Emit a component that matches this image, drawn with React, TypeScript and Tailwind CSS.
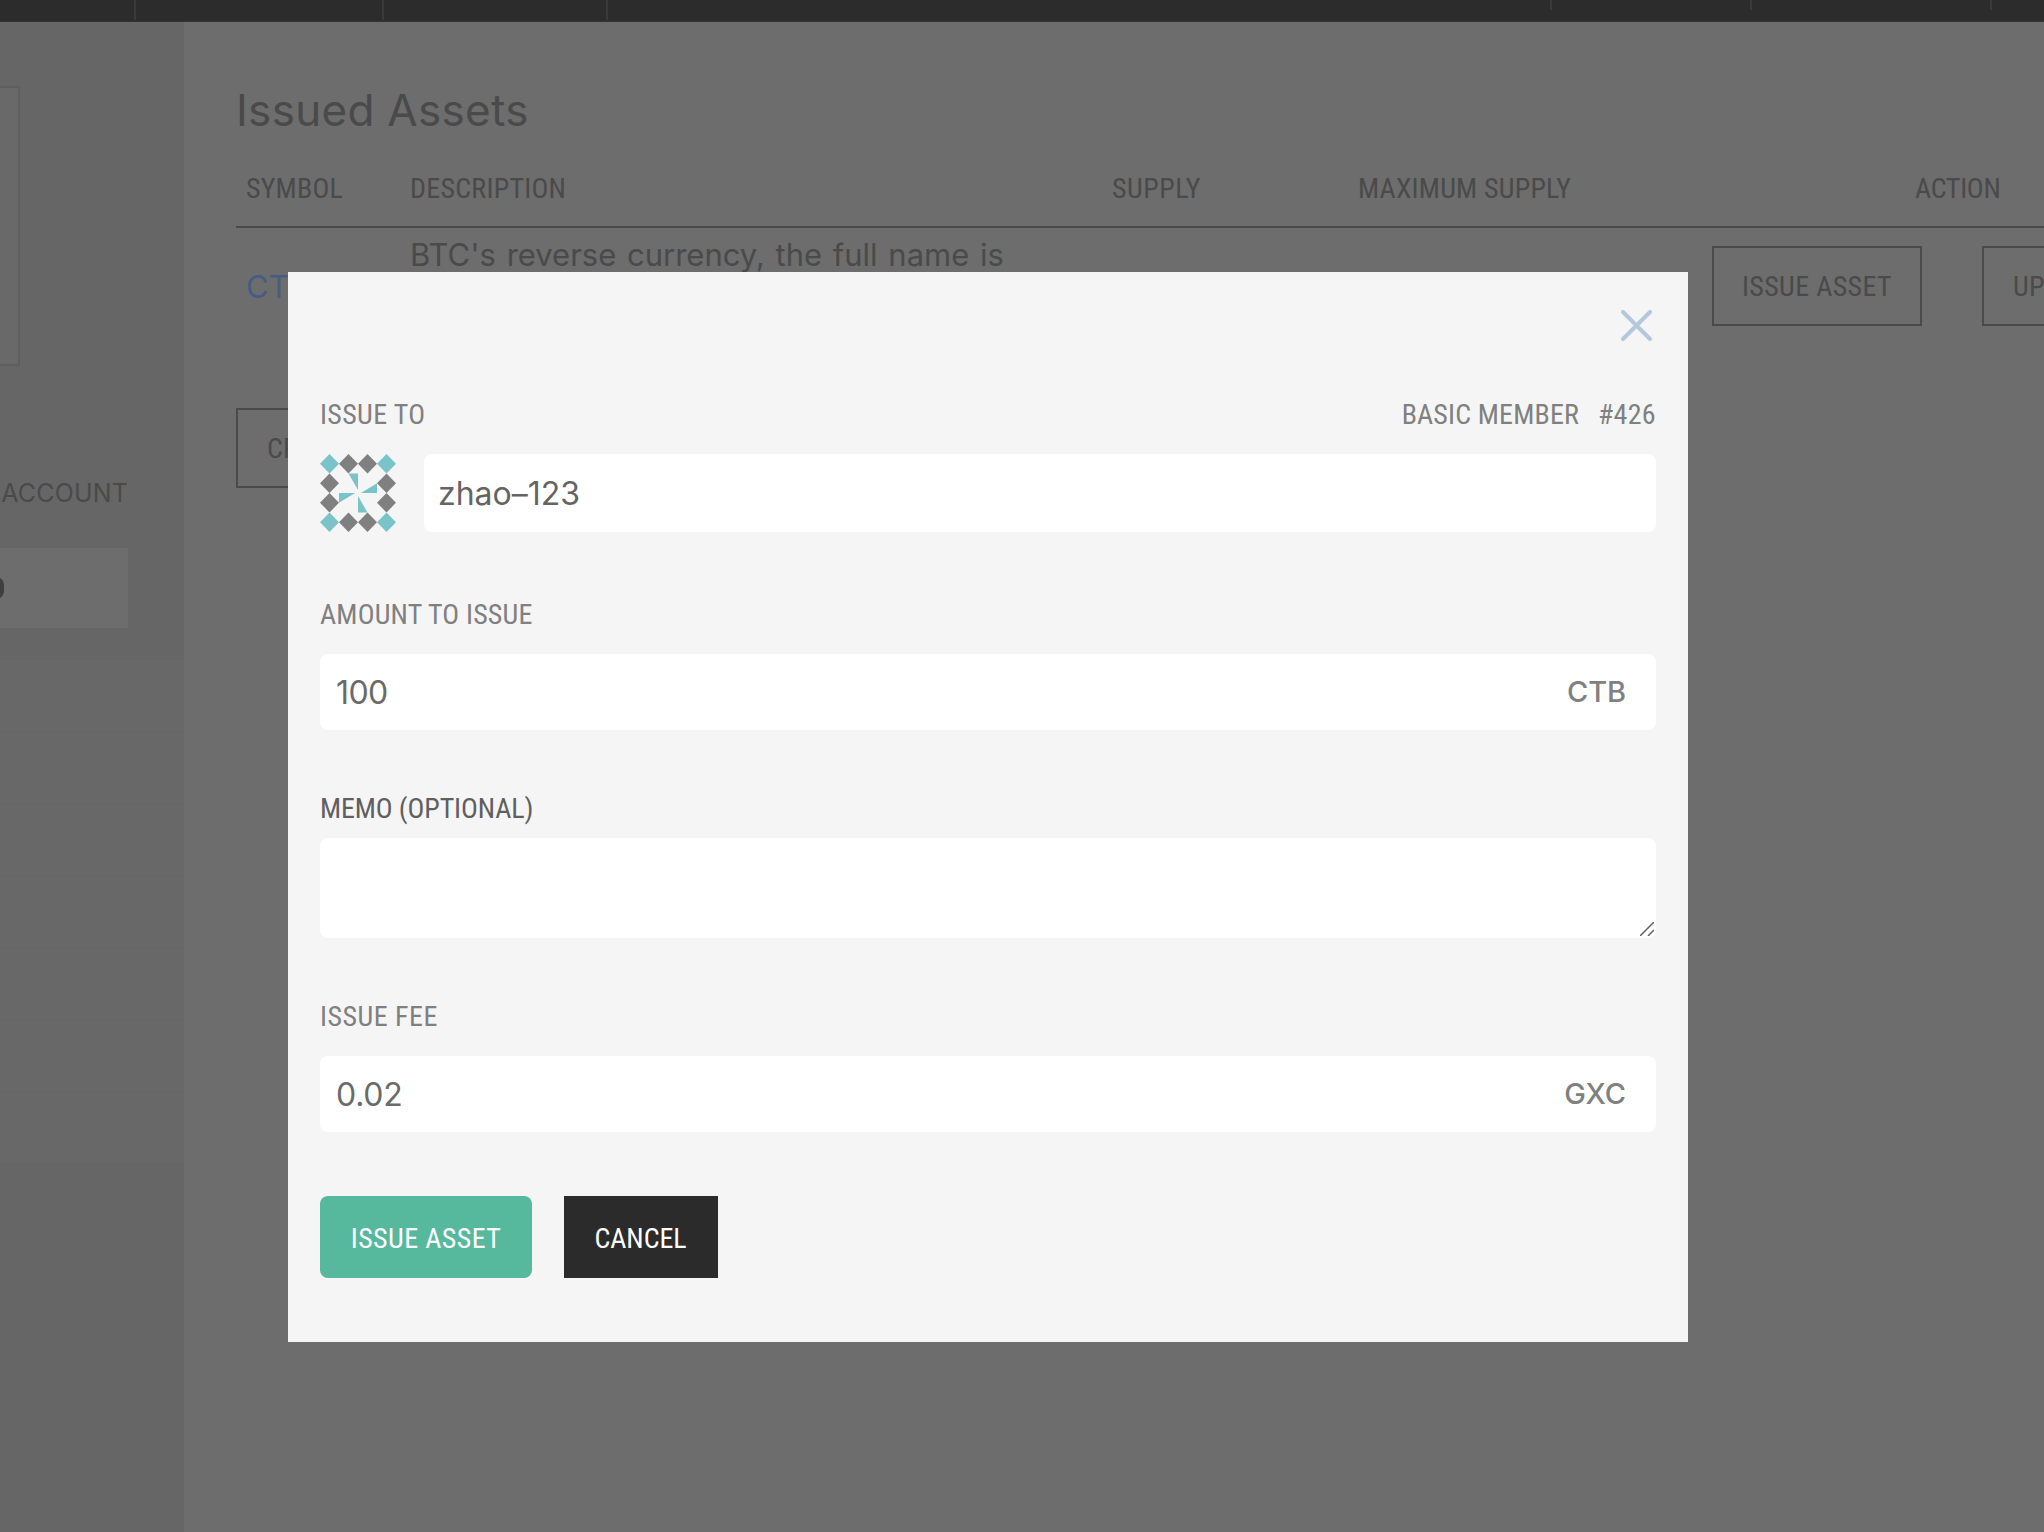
import type { ReactNode } from "react";

const NAV_LEFT = ["w-[134px]", "w-[246px]", "w-[222px]"];
const NAV_RIGHT = ["w-[200px]", "w-[240px]", "w-[54px]"];

function Identicon() {
  const cells: [number, number][] = [];
  for (let r = 0; r < 4; r++)
    for (let c = 0; c < 4; c++)
      if (r === 0 || r === 3 || c === 0 || c === 3) cells.push([c, r]);
  return (
    <svg viewBox="0 0 4 4" preserveAspectRatio="none" className="h-[78px] w-[76px] shrink-0">
      {cells.map(([c, r]) => (
        <polygon
          key={`${c}-${r}`}
          points={`${c + 0.5},${r} ${c + 1},${r + 0.5} ${c + 0.5},${r + 1} ${c},${r + 0.5}`}
          fill={(c === 0 || c === 3) && (r === 0 || r === 3) ? "#7ac4c9" : "#808080"}
        />
      ))}
      <g fill="#7ac4c9">
        <polygon points="1.5,1 2,1 2,1.85" />
        <polygon points="3,1.5 3,2 2.15,2" />
        <polygon points="2.5,3 2,3 2,2.15" />
        <polygon points="1,2.5 1,2 1.85,2" />
      </g>
    </svg>
  );
}

/* Condensed uppercase label */
function Cond({ children, className = "tracking-[0.2px]" }: { children: ReactNode; className?: string }) {
  return (
    <span
      className={`inline-block pt-px whitespace-pre font-[Roboto,sans-serif] text-[28px] leading-[31px] [font-stretch:75%] ${className}`}
    >
      {children}
    </span>
  );
}

function Sidebar() {
  return (
    <aside className="flex w-[184px] shrink-0 flex-col bg-[#666666]">
      <div className="mt-16 h-[280px] w-5 border-y-2 border-r-2 border-[#5f5f5f] bg-[#696969]" />
      <div className="mt-[112px] flex w-32 justify-end text-[25px] leading-[30px] tracking-[0.15px] text-[#4a4a4a]">
        ACCOUNT
      </div>
      <div className="mt-10 flex h-20 w-32 items-center overflow-hidden bg-[#6d6d6d]">
        <div className="-ml-3 h-[22px] w-4 rounded-full bg-[#3f3f3f]" />
      </div>
      <div className="mt-8 flex flex-col">
        {[0, 1, 2, 3, 4, 5, 6].map((i) => (
          <div key={i} className="h-[72px] border-b border-[#666666] bg-[#686868]" />
        ))}
      </div>
    </aside>
  );
}

function Assets() {
  return (
    <main className="min-w-0 flex-1 overflow-hidden bg-[#6d6d6d] pl-[52px] text-[#4a4a4a]">
      <h1 className="mt-[60px] text-[44px] leading-[56px] tracking-[0.3px] whitespace-nowrap">
        Issued Assets
      </h1>
      <div className="mt-[22px] flex h-[68px] border-b-2 border-[#4a4a4a] pt-3 pl-[10px]">
        <div className="w-[164px] shrink-0"><Cond>SYMBOL</Cond></div>
        <div className="w-[702px] shrink-0"><Cond className="tracking-[0.25px]">DESCRIPTION</Cond></div>
        <div className="w-[246px] shrink-0"><Cond className="tracking-[0.5px]">SUPPLY</Cond></div>
        <div className="w-[557px] shrink-0"><Cond>MAXIMUM SUPPLY</Cond></div>
        <div className="shrink-0"><Cond className="tracking-[-0.3px]">ACTION</Cond></div>
      </div>
      <div className="flex h-[116px] pl-[10px]">
        <div className="w-[164px] shrink-0 pt-[41px] text-[31px] leading-9 text-[#475c82]">CTB</div>
        <div className="w-[1302px] shrink-0 pt-[9px] text-[31px] leading-9 [word-spacing:2px] whitespace-nowrap">
          BTC's reverse currency, the full name is
        </div>
        <div className="mt-[18px] flex h-20 w-[210px] shrink-0 items-center border-2 border-[#4a4a4a] pl-[28px]">
          <Cond className="tracking-[0.35px]">ISSUE ASSET</Cond>
        </div>
        <div className="mt-[18px] ml-[60px] flex h-20 w-[240px] shrink-0 items-center border-2 border-[#4a4a4a] pl-[29px]">
          <Cond>UPDATE ASSET</Cond>
        </div>
      </div>
      <div className="mt-16 flex h-20 w-[260px] items-center border-2 border-[#4a4a4a] pl-[29px]">
        <Cond>CREATE ASSET</Cond>
      </div>
    </main>
  );
}

function IssueDialog() {
  return (
    <div className="absolute top-[272px] left-[288px] flex h-[1070px] w-[1400px] flex-col bg-[#f5f5f5] px-8 text-[#808080]">
      <div className="mt-[38px] flex justify-end pr-1">
        <svg viewBox="0 0 31 31" className="h-[31px] w-[31px]" stroke="#b4c7dc" strokeWidth="4" strokeLinecap="round">
          <path d="M2 2 29 29M29 2 2 29" />
        </svg>
      </div>
      <div className="mt-[57px] flex h-8 justify-between">
        <Cond className="tracking-[0.35px]">ISSUE TO</Cond>
        <div className="flex gap-[19px]">
          <Cond className="tracking-[0.15px]">BASIC MEMBER</Cond>
          <Cond className="tracking-[0.3px]">#426</Cond>
        </div>
      </div>
      <div className="mt-6 flex gap-7">
        <Identicon />
        <div className="flex h-[78px] flex-1 items-center rounded-lg bg-white pt-px pl-[14px] text-[32px] text-[#646464]">
          zhao–123
        </div>
      </div>
      <Cond className="mt-[66px] tracking-[0.18px]">AMOUNT TO ISSUE</Cond>
      <div className="mt-6 flex h-[76px] shrink-0 items-center justify-between rounded-lg bg-white pr-[30px] pl-4">
        <span className="pt-0.5 text-[32px] tracking-[-0.6px] text-[#6a6a6a]">100</span>
        <span className="text-[29px] font-medium tracking-[-0.1px]">CTB</span>
      </div>
      <Cond className="mt-[62px] tracking-[-0.12px] text-[#5f5f5f]">MEMO (OPTIONAL)</Cond>
      <div className="mt-[14px] flex h-[100px] shrink-0 items-end justify-end rounded-lg bg-white p-[2px]">
        <svg viewBox="0 0 14 14" className="h-[14px] w-[14px]" stroke="#606060" strokeWidth="1.5">
          <path d="M0 14 14 0M8 14 14 8" />
        </svg>
      </div>
      <Cond className="mt-[62px] tracking-[0.5px]">ISSUE FEE</Cond>
      <div className="mt-6 flex h-[76px] shrink-0 items-center justify-between rounded-lg bg-white pr-[30px] pl-4">
        <span className="pt-0.5 text-[32px] tracking-[-0.25px] text-[#6a6a6a]">0.02</span>
        <span className="text-[29px] font-medium">GXC</span>
      </div>
      <div className="mt-16 flex gap-8">
        <button className="flex h-[82px] w-[212px] items-center justify-center rounded-lg bg-[#56b89d] pt-px text-white">
          <Cond className="tracking-[0.4px]">ISSUE ASSET</Cond>
        </button>
        <button className="flex h-[82px] w-[154px] items-center justify-center bg-[#2b2b2b] pt-px pr-px text-white">
          <Cond className="tracking-[-0.05px]">CANCEL</Cond>
        </button>
      </div>
    </div>
  );
}

export default function App() {
  return (
    <div className="relative flex h-[1532px] w-[2044px] flex-col overflow-hidden bg-[#6d6d6d] font-[Inter,sans-serif]">
      <header className="flex h-[22px] shrink-0 justify-between border-b border-[#343434] bg-[#2c2c2c]">
        <div className="flex">
          {NAV_LEFT.map((w, i) => (
            <div key={i} className={`${w} box-content h-5 border-r-2 border-[#3a3a3a]`} />
          ))}
        </div>
        <div className="flex">
          {NAV_RIGHT.map((w, i) => (
            <div key={i} className={`${w} h-[10px] border-l-2 border-[#3a3a3a]`} />
          ))}
        </div>
      </header>
      <div className="flex min-h-0 flex-1">
        <Sidebar />
        <Assets />
      </div>
      <IssueDialog />
    </div>
  );
}
